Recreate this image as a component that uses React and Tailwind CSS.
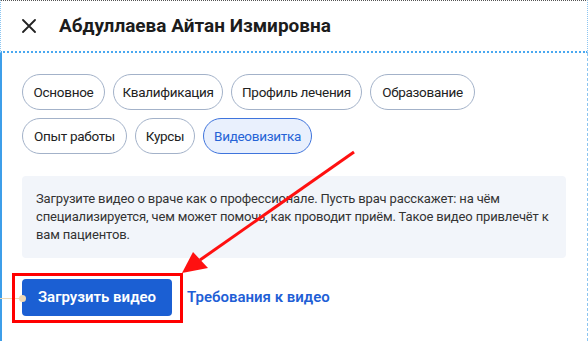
import React from "react";

const tabs = [
  [
    ["Основное", "w-[83px]"],
    ["Квалификация", "w-[110px]"],
    ["Профиль лечения", "w-[131px]"],
    ["Образование", "w-[105px]"],
  ],
  [
    ["Опыт работы", "w-[105px]"],
    ["Курсы", "w-[60px]"],
    ["Видеовизитка", "w-[109px]"],
  ],
];

function Chip({ label, width, active }) {
  return (
    <button
      className={
        (active
          ? "border-[#3f74dc] bg-[#e9f0fd] text-[#2563d6] "
          : "border-[#a3b2c9] bg-white text-[#222] ") +
        width +
        " h-[36px] rounded-full border text-[13.5px] tracking-[-0.3px] text-center whitespace-nowrap"
      }
    >
      {label}
    </button>
  );
}

export default function App() {
  return (
    <div
      className="relative w-[588px] h-[341px] overflow-hidden bg-white"
      style={{ fontFamily: "Roboto, 'Noto Sans', sans-serif" }}
    >
      {/* header */}
      <div className="h-[53px] flex items-center border-t border-dotted border-t-[#555] border-x border-dashed border-x-[#8cc6f2] border-b-2 border-b-[#4aa8f0]">
        <div className="w-[58px] flex justify-center pr-[3px]">
          <svg width="14" height="14" viewBox="0 0 14 14" fill="none" stroke="#222" strokeWidth="1.8" strokeLinecap="round">
            <path d="M1 1l12 12M13 1L1 13" />
          </svg>
        </div>
        <h1 className="text-[19px] font-bold text-[#1c1c1c]">Абдуллаева Айтан Измировна</h1>
      </div>

      {/* body */}
      <div className="h-[288px] border-l-2 border-l-[#3d9ee9]">
        <div className="h-full border-r border-dashed border-r-[#8cc6f2] pl-[20px] pr-[20px] pt-[21px]">
          <div className="flex flex-col gap-[8px]">
            {tabs.map((row, i) => (
              <div key={i} className="flex gap-[8px]">
                {row.map(([t, w]) => (
                  <Chip key={t} label={t} width={w} active={t === "Видеовизитка"} />
                ))}
              </div>
            ))}
          </div>

          <div className="mt-[22px] w-[544px] rounded-[4px] bg-[#f2f5fa] p-[14px] text-[13px] tracking-[-0.15px] leading-[18px] text-[#333]">
            Загрузите видео о враче как о профессионале. Пусть врач расскажет: на чём специализируется, чем может помочь, как проводит приём. Такое видео привлечёт к вам пациентов.
          </div>

          <div className="mt-[21px] flex items-center gap-[15px]">
            <button className="h-[37px] w-[150px] rounded-[4px] bg-[#1b5fd3] text-white text-[15px] font-semibold">
              Загрузить видео
            </button>
            <a className="text-[15px] font-semibold text-[#1f5fd6]">Требования к видео</a>
          </div>
        </div>
      </div>

      {/* annotations */}
      <div className="absolute left-0 top-[298px] w-[22px] h-px bg-[#f0d9b4]" />
      <div className="absolute left-[19px] top-[295px] w-[7px] h-[7px] rounded-full bg-[#f0d9b4]" />
      <div className="absolute left-[12px] top-[273px] w-[171px] h-[50px] border-[3px] border-[#ff0000]" />
      <svg className="absolute left-0 top-0 pointer-events-none" width="588" height="341">
        <line x1="354" y1="152" x2="200" y2="260" stroke="#ff1010" strokeWidth="3" />
        <polygon points="182,273 193,252 208,268" fill="#ff1010" />
      </svg>
    </div>
  );
}
